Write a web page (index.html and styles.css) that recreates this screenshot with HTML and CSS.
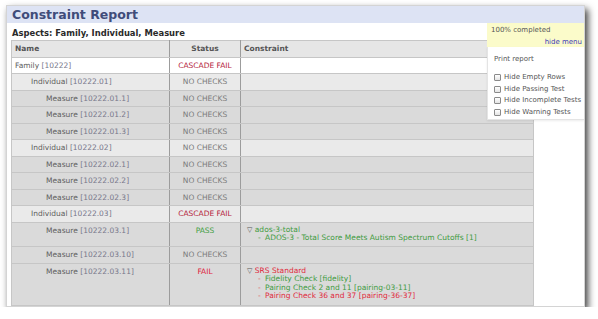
FILE: index.html
```html
<!DOCTYPE html>
<html lang="en">
<head>
    <meta charset="UTF-8">
    <title>Constraint Report</title>
    <link rel="stylesheet" href="styles.css">
</head>
<body>
    <div class="window">
        <div class="titlebar">Constraint Report</div>
        <div class="content">
            <h2 class="aspects">Aspects: Family, Individual, Measure</h2>
            <table class="report">
                <colgroup>
                    <col class="col-name">
                    <col class="col-status">
                    <col class="col-constraint">
                </colgroup>
                <thead>
                    <tr>
                        <th>Name</th>
                        <th class="status">Status</th>
                        <th>Constraint</th>
                    </tr>
                </thead>
                <tbody>
                    <tr class="family">
                        <td class="name">Family <span class="id">[10222]</span></td>
                        <td class="status cascade">CASCADE FAIL</td>
                        <td></td>
                    </tr>
                    <tr class="individual">
                        <td class="name">Individual <span class="id">[10222.01]</span></td>
                        <td class="status none">NO CHECKS</td>
                        <td></td>
                    </tr>
                    <tr class="measure">
                        <td class="name">Measure <span class="id">[10222.01.1]</span></td>
                        <td class="status none">NO CHECKS</td>
                        <td></td>
                    </tr>
                    <tr class="measure">
                        <td class="name">Measure <span class="id">[10222.01.2]</span></td>
                        <td class="status none">NO CHECKS</td>
                        <td></td>
                    </tr>
                    <tr class="measure">
                        <td class="name">Measure <span class="id">[10222.01.3]</span></td>
                        <td class="status none">NO CHECKS</td>
                        <td></td>
                    </tr>
                    <tr class="individual">
                        <td class="name">Individual <span class="id">[10222.02]</span></td>
                        <td class="status none">NO CHECKS</td>
                        <td></td>
                    </tr>
                    <tr class="measure">
                        <td class="name">Measure <span class="id">[10222.02.1]</span></td>
                        <td class="status none">NO CHECKS</td>
                        <td></td>
                    </tr>
                    <tr class="measure">
                        <td class="name">Measure <span class="id">[10222.02.2]</span></td>
                        <td class="status none">NO CHECKS</td>
                        <td></td>
                    </tr>
                    <tr class="measure">
                        <td class="name">Measure <span class="id">[10222.02.3]</span></td>
                        <td class="status none">NO CHECKS</td>
                        <td></td>
                    </tr>
                    <tr class="individual">
                        <td class="name">Individual <span class="id">[10222.03]</span></td>
                        <td class="status cascade">CASCADE FAIL</td>
                        <td></td>
                    </tr>
                    <tr class="measure">
                        <td class="name">Measure <span class="id">[10222.03.1]</span></td>
                        <td class="status pass">PASS</td>
                        <td class="constraint">
                            <div class="check pass"><span class="tri">&#9661;</span> ados-3-total</div>
                            <ul class="items pass">
                                <li class="pass">ADOS-3 - Total Score Meets Autism Spectrum Cutoffs [1]</li>
                            </ul>
                        </td>
                    </tr>
                    <tr class="measure">
                        <td class="name">Measure <span class="id">[10222.03.10]</span></td>
                        <td class="status none">NO CHECKS</td>
                        <td></td>
                    </tr>
                    <tr class="measure">
                        <td class="name">Measure <span class="id">[10222.03.11]</span></td>
                        <td class="status fail">FAIL</td>
                        <td class="constraint">
                            <div class="check fail"><span class="tri">&#9661;</span> SRS Standard</div>
                            <ul class="items fail">
                                <li class="pass">Fidelity Check [fidelity]</li>
                                <li class="pass">Pairing Check 2 and 11 [pairing-03-11]</li>
                                <li class="fail">Pairing Check 36 and 37 [pairing-36-37]</li>
                            </ul>
                        </td>
                    </tr>
                </tbody>
            </table>
        </div>

        <div class="menu">
            <div class="menu-status">
                <div>100% completed</div>
                <a class="hide-link" href="#">hide menu</a>
            </div>
            <div class="menu-body">
                <div class="print">Print report</div>
                <ul class="filters">
                    <li><span class="box"></span>Hide Empty Rows</li>
                    <li><span class="box"></span>Hide Passing Test</li>
                    <li><span class="box"></span>Hide Incomplete Tests</li>
                    <li><span class="box"></span>Hide Warning Tests</li>
                </ul>
            </div>
        </div>
    </div>
</body>
</html>
```

FILE: styles.css
```css
body {
    margin: 0;
    background-color: #ffffff;
    font-family: 'DejaVu Sans', Verdana, sans-serif;
}
.window {
    position: relative;
    box-sizing: border-box;
    width: 579px;
    height: 302px;
    margin: 5px 0 0 6px;
    border: 1px solid #d4d4d4;
    background-color: #ffffff;
    box-shadow: 3px 4px 7px rgba(0, 0, 0, 0.75);
    overflow: hidden;
}
.titlebar {
    height: 17px;
    line-height: 17px;
    padding-left: 5px;
    background-color: #dde3f4;
    color: #404c7a;
    font-size: 12.5px;
    font-weight: bold;
}
.content {
    padding: 0 4px;
}
.aspects {
    margin: 0;
    height: 17px;
    padding: 4px 0 0 1px;
    box-sizing: border-box;
    line-height: 12px;
    font-size: 8.4px;
    font-weight: bold;
    color: #2a2a2a;
}
.report {
    width: 522px;
    table-layout: fixed;
    border-collapse: collapse;
    font-size: 7.5px;
    line-height: 9px;
    color: #666666;
}
.col-name { width: 158px; }
.col-status { width: 71px; }
.col-constraint { width: 293px; }
.report th,
.report td {
    padding: 3px 0 3.5px 3px;
    border: 1px solid #c6c6c6;
    border-left-color: #9c9c9c;
    border-right-color: #9c9c9c;
    vertical-align: top;
    text-align: left;
}
.report tr > :first-child {
    border-left-color: #c6c6c6;
}
.report tr > :last-child {
    border-right-color: #c6c6c6;
}
.report th {
    background-color: #e6e6e6;
    color: #555555;
    font-weight: bold;
}
.report .status {
    text-align: center;
    padding-left: 0;
}
.family td { background-color: #ffffff; }
.individual td { background-color: #eaeaea; }
.measure td { background-color: #dadada; }
.individual .name { padding-left: 19px; }
.measure .name { padding-left: 34px; }
.name { color: #5e5e5e; }
.name .id { color: #77778a; }
.status.none { color: #7a7a7a; }
.status.cascade { color: #b5243c; }
.status.pass { color: #43a043; }
.status.fail { color: #e0243a; }
.report .constraint {
    padding-left: 6px;
    line-height: 8.6px;
}
.check.pass { color: #3f9a3f; }
.check.fail { color: #e0283a; }
.tri {
    color: #555555;
    font-size: 7px;
}
.items {
    list-style: none;
    margin: 0;
    padding: 0 0 0 18px;
}
.items li {
    position: relative;
}
.items li::before {
    content: '-';
    position: absolute;
    left: -7px;
}
.items.pass li::before { color: #3f9a3f; }
.items.fail li::before { color: #e05a5a; }
.items li.pass { color: #3f9a3f; }
.items li.fail { color: #e0283a; }

/* floating menu */
.menu {
    position: absolute;
    top: 17px;
    right: 0;
    width: 97px;
    font-size: 7px;
    line-height: 9px;
    color: #555555;
}
.menu-status {
    height: 24px;
    box-sizing: border-box;
    padding: 3px 2px 0 4px;
    background-color: #fbfbca;
}
.hide-link {
    display: block;
    margin-top: 3px;
    text-align: right;
    color: #3b3bb8;
    text-decoration: none;
}
.menu-body {
    background-color: #ffffff;
    border-left: 1px solid #e4e4e4;
    border-bottom: 1px solid #e4e4e4;
    padding: 8px 0 1px 6px;
    box-shadow: 0 1px 2px rgba(0, 0, 0, 0.08);
}
.filters {
    list-style: none;
    margin: 8px 0 0;
    padding: 0;
}
.filters li {
    display: flex;
    align-items: center;
    height: 11.6px;
    white-space: nowrap;
}
.box {
    width: 5px;
    height: 5px;
    margin-right: 3px;
    border: 1px solid #8a8a8a;
    border-radius: 1px;
    background: linear-gradient(#ffffff, #e4e4e4);
}
```
